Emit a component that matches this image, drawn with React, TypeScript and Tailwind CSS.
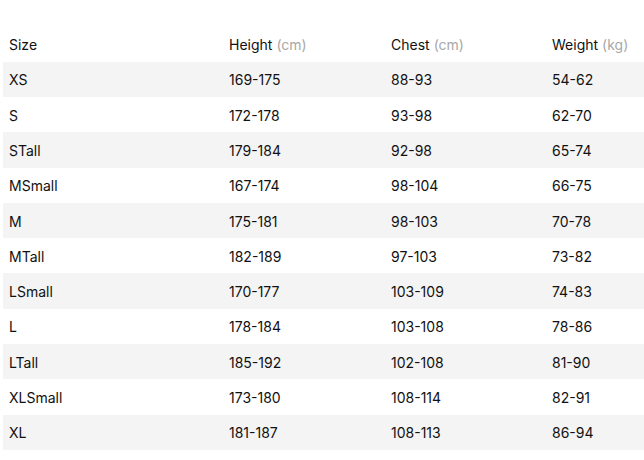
import React from "react";

const rows: [string, string, string, string][] = [
  ["XS", "169-175", "88-93", "54-62"],
  ["S", "172-178", "93-98", "62-70"],
  ["STall", "179-184", "92-98", "65-74"],
  ["MSmall", "167-174", "98-104", "66-75"],
  ["M", "175-181", "98-103", "70-78"],
  ["MTall", "182-189", "97-103", "73-82"],
  ["LSmall", "170-177", "103-109", "74-83"],
  ["L", "178-184", "103-108", "78-86"],
  ["LTall", "185-192", "102-108", "81-90"],
  ["XLSmall", "173-180", "108-114", "82-91"],
  ["XL", "181-187", "108-113", "86-94"],
];

const cell = "px-[6px] flex items-center h-[35.3px] pt-[1px]";

export default function App() {
  return (
    <div
      className="w-[644px] h-[460px] bg-white overflow-hidden text-[14px] text-[#111111]"
      style={{ fontFamily: "Inter, 'Liberation Sans', sans-serif" }}
    >
      <div className="ml-[3px] pt-[26.4px]">
        <div className="grid grid-cols-[220px_162px_161px_1fr]">
          <div className={cell}>Size</div>
          <div className={cell}>
            Height<span className="ml-[4px] text-[#a8a8a8]">(cm)</span>
          </div>
          <div className={cell}>
            Chest<span className="ml-[4px] text-[#a8a8a8]">(cm)</span>
          </div>
          <div className={cell}>
            Weight<span className="ml-[4px] text-[#a8a8a8]">(kg)</span>
          </div>
        </div>
        {rows.map((r, i) => (
          <div
            key={r[0]}
            className={
              "grid grid-cols-[220px_162px_161px_1fr] " +
              (i % 2 === 0 ? "bg-[#f4f4f4]" : "bg-white")
            }
          >
            {r.map((v, j) => (
              <div key={j} className={cell}>
                {v}
              </div>
            ))}
          </div>
        ))}
      </div>
    </div>
  );
}
